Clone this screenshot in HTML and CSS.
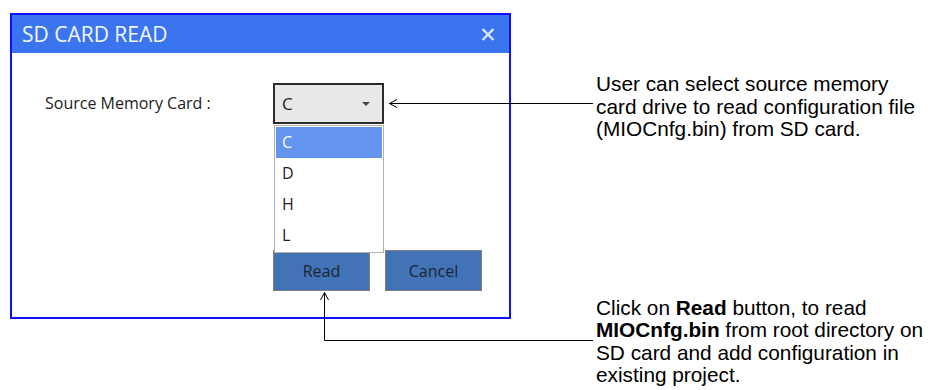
FILE: index.html
```html
<!DOCTYPE html>
<html lang="en">
<head>
    <meta charset="UTF-8">
    <meta name="viewport" content="width=device-width, initial-scale=1.0">
    <title>SD Card Read</title>
    <link rel="stylesheet" href="styles.css">
</head>
<body>
    <div class="page">
        <div class="dialog">
            <div class="titlebar">
                <span class="title">SD CARD READ</span>
                <svg class="close" width="14" height="13" viewBox="0 0 14 13">
                    <path d="M1.5 1 L12.5 12 M12.5 1 L1.5 12" stroke="#dce5f8" stroke-width="2.4" fill="none"/>
                </svg>
            </div>
            <div class="dialog-body">
                <label class="field-label">Source Memory Card :</label>
                <div class="field">
                    <div class="combo">
                        <span>C</span>
                        <span class="caret"></span>
                    </div>
                    <ul class="dropdown">
                        <li class="selected">C</li>
                        <li>D</li>
                        <li>H</li>
                        <li>L</li>
                    </ul>
                    <div class="actions">
                        <button>Read</button>
                        <button>Cancel</button>
                    </div>
                </div>
            </div>
        </div>

        <div class="notes">
            <p class="note note-select">User can select source memory<br>card drive to read configuration file<br>(MIOCnfg.bin) from SD card.</p>
            <p class="note note-read">Click on <b>Read</b> button, to read<br><b>MIOCnfg.bin</b> from root directory on<br>SD card and add configuration in<br>existing project.</p>
        </div>

        <!-- callout arrows drawn over the page -->
        <svg class="callouts" width="936" height="390" viewBox="0 0 936 390">
            <g stroke="#000" stroke-width="1" fill="none">
                <path d="M389 103.5 H593"/>
                <path d="M397 99.5 L389.5 103.5 L397 107.5"/>
                <path d="M324.5 292 V340.5 H593"/>
                <path d="M320.5 300 L324.5 292.5 L328.5 300"/>
            </g>
        </svg>
    </div>
</body>
</html>
```

FILE: styles.css
```css
body {
    margin: 0;
    background: #fff;
}
.page {
    position: relative;
    display: flex;
    align-items: flex-start;
    width: 936px;
    height: 390px;
    padding: 13px 0 0 10px;
    box-sizing: border-box;
    overflow: hidden;
}
.dialog {
    width: 501px;
    height: 306px;
    border: 2px solid #0f0fff;
    box-sizing: border-box;
    font-family: "Open Sans", "Noto Sans", sans-serif;
}
.titlebar {
    height: 38px;
    background: #3a75ef;
    display: flex;
    align-items: center;
    justify-content: space-between;
    padding: 0 14px 0 10px;
}
.title {
    color: #f4f7ff;
    font-size: 21px;
}
.dialog-body {
    display: grid;
    grid-template-columns: 228px auto;
    align-items: start;
    padding: 30px 0 0 33px;
}
.field-label {
    font-size: 16px;
    color: #222;
    line-height: 41px;
}
.field {
    position: relative;
    display: flex;
    flex-direction: column;
    align-items: flex-start;
}
.combo {
    width: 111px;
    height: 41px;
    box-sizing: border-box;
    border: 2px solid #2b2b2b;
    background: #e8e8e8;
    display: flex;
    align-items: center;
    justify-content: space-between;
    padding: 0 12px 0 7px;
    font-size: 17px;
    color: #222;
}
.caret {
    width: 0;
    height: 0;
    border-left: 4px solid transparent;
    border-right: 4px solid transparent;
    border-top: 4px solid #444;
}
.dropdown {
    position: absolute;
    top: 42px;
    left: 1px;
    z-index: 2;
    width: 110px;
    box-sizing: border-box;
    margin: 0;
    padding: 1px;
    list-style: none;
    background: #fff;
    border: 1px solid #b5b1aa;
}
.dropdown li {
    height: 31px;
    line-height: 31px;
    padding-left: 6px;
    font-size: 16px;
    color: #222;
}
.dropdown li.selected {
    background: #6495ee;
    color: #fff;
}
.actions {
    display: flex;
    gap: 15px;
    margin-top: 126px;
}
.actions button {
    width: 97px;
    height: 41px;
    background: #4273b7;
    border: 1px solid #808080;
    color: #1b2433;
    font-family: "Open Sans", "Noto Sans", sans-serif;
    font-size: 16px;
    padding: 0;
}
.notes {
    margin-left: 85px;
    font-family: "Liberation Sans", Arial, sans-serif;
    font-size: 20.8px;
    line-height: 22.5px;
    color: #000;
    white-space: nowrap;
}
.note {
    margin: 0;
}
.note-select {
    margin-top: 60px;
}
.note-read {
    margin-top: 156px;
}
.callouts {
    position: absolute;
    top: 0;
    left: 0;
    pointer-events: none;
}
```
